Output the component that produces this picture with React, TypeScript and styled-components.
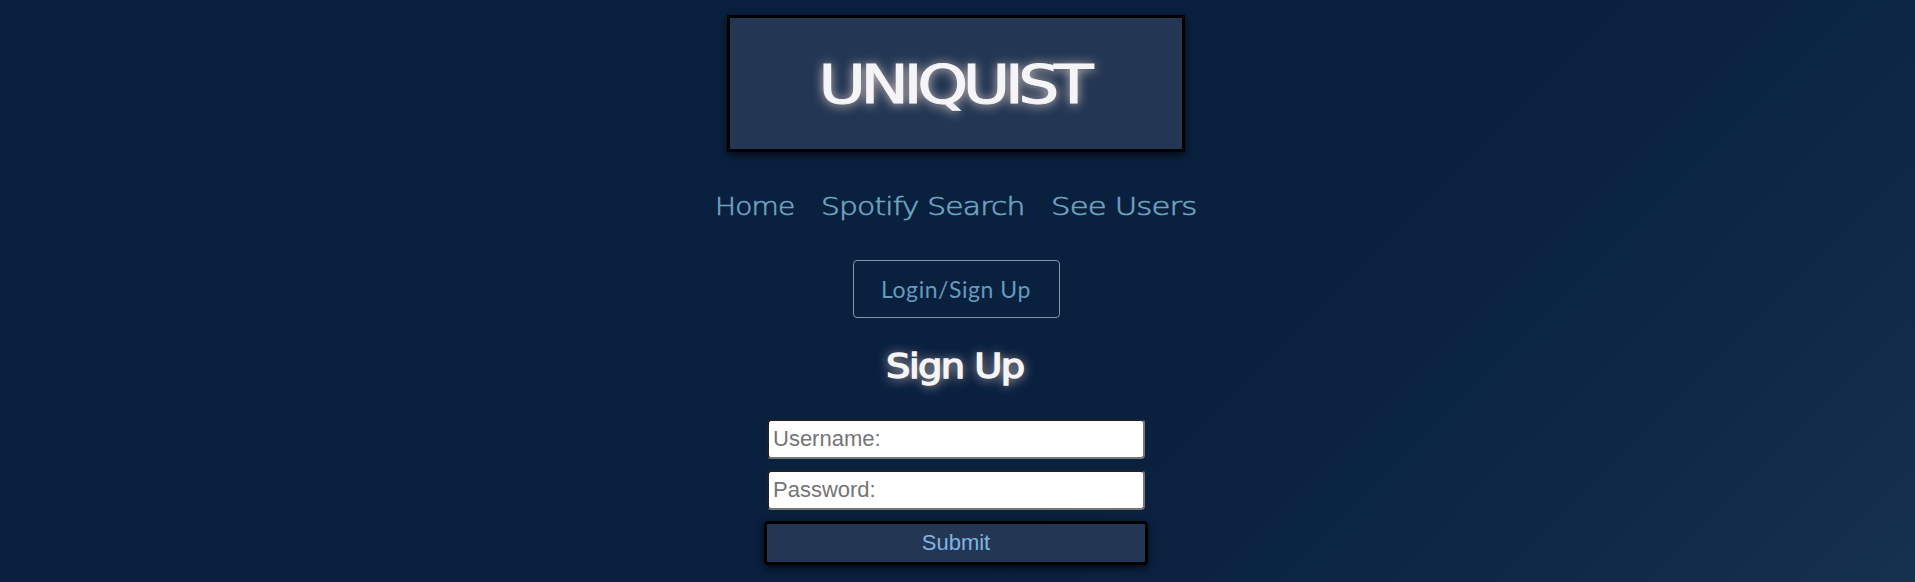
import React from 'react';
import styled, { createGlobalStyle } from 'styled-components';

const GlobalStyle = createGlobalStyle`
  * { box-sizing: border-box; }
  html { height: 100%; }
  body {
    margin: 0;
    min-height: 100%;
    background: linear-gradient(135deg, #0a203f 0%, #0a203f 62%, #0d2241 71.6%, #0a2543 72.6%, #0e2846 84%, #16304f 100%) no-repeat;
    font-family: "DejaVu Sans", sans-serif;
  }
`;

const Page = styled.main`
  display: flex;
  flex-direction: column;
  align-items: center;
  height: 582px;
  padding: 15px 3px 0 0;
  overflow: hidden;
`;

const Banner = styled.header`
  display: flex;
  align-items: center;
  justify-content: center;
  width: 458px;
  height: 137px;
  padding-top: 4px;
  border: 3px solid #000;
  background: #233754;
  box-shadow: 0 3px 8px rgba(0, 0, 0, 0.7);
`;

const Glow = styled.span<{ $size: number; $stretch: number; $tracking: number; $stroke: number }>`
  display: block;
  margin-left: ${(p) => p.$tracking}px;
  white-space: nowrap;
  color: #f5f5f7;
  font-size: ${(p) => p.$size}px;
  font-weight: 400;
  line-height: 1.2;
  letter-spacing: ${(p) => p.$tracking}px;
  -webkit-text-stroke: ${(p) => p.$stroke}px #f5f5f7;
  text-shadow: 0 1px 10px rgba(255, 228, 215, 0.95);
  transform: scaleX(${(p) => p.$stretch});
`;

const Title = styled.h1`
  margin: 0;
`;

const Nav = styled.nav`
  display: flex;
  justify-content: center;
  gap: 26px;
  margin-top: 38px;
  height: 34px;
`;

const NavLink = styled.a<{ $width: number; $stretch: number }>`
  width: ${(p) => p.$width}px;
  white-space: nowrap;
  color: #6fa5c0;
  font-family: "DejaVu Sans", sans-serif;
  font-weight: 200;
  font-size: 25px;
  line-height: 34px;
  letter-spacing: -0.7px;
  -webkit-text-stroke: 0.6px #6fa5c0;
  text-decoration: none;
  transform: scaleX(${(p) => p.$stretch});
  transform-origin: left;
`;

const LoginButton = styled.button`
  width: 207px;
  height: 58px;
  margin-top: 36px;
  padding: 0;
  border: 1px solid #8395a9;
  border-radius: 4px;
  background: transparent;
  color: #649bbd;
  font: 400 23px/56px Lato, sans-serif;
  letter-spacing: 0.55px;
`;

const Heading = styled.h2`
  margin: 28px 0 0;
  height: 41px;
`;

const Form = styled.form`
  display: flex;
  flex-direction: column;
  align-items: center;
  margin-top: 32px;
`;

const Field = styled.input`
  width: 378px;
  height: 40px;
  margin-bottom: 11px;
  padding: 1px 4px;
  border: 2px solid;
  border-color: #1d2228 #767676 #767676 #1d2228;
  border-radius: 4px;
  background: #fff;
  font: 22px "Liberation Sans", sans-serif;
  &::placeholder { color: #757575; opacity: 1; }
`;

const Submit = styled.button`
  width: 384px;
  height: 44px;
  padding: 0;
  border: 3px solid #000;
  border-radius: 4px;
  background: #233754;
  color: #7fb5e0;
  font: 22px "Liberation Sans", sans-serif;
  box-shadow: 0 3px 8px rgba(0, 0, 0, 0.7);
`;

export default function App() {
  return (
    <>
      <GlobalStyle />
      <Page>
        <Banner>
          <Title>
            <Glow $size={53.5} $stretch={1.21} $tracking={-4.5} $stroke={1}>UNIQUIST</Glow>
          </Title>
        </Banner>
        <Nav>
          <NavLink href="#" $width={80} $stretch={1.12}>Home</NavLink>
          <NavLink href="#" $width={204} $stretch={1.19}>Spotify Search</NavLink>
          <NavLink href="#" $width={146} $stretch={1.23}>See Users</NavLink>
        </Nav>
        <LoginButton>Login/Sign Up</LoginButton>
        <Heading>
          <Glow $size={34} $stretch={1.13} $tracking={-1.4} $stroke={1.4}>Sign Up</Glow>
        </Heading>
        <Form onSubmit={(e) => e.preventDefault()}>
          <Field placeholder="Username:" />
          <Field type="password" placeholder="Password:" />
          <Submit type="submit">Submit</Submit>
        </Form>
      </Page>
    </>
  );
}
